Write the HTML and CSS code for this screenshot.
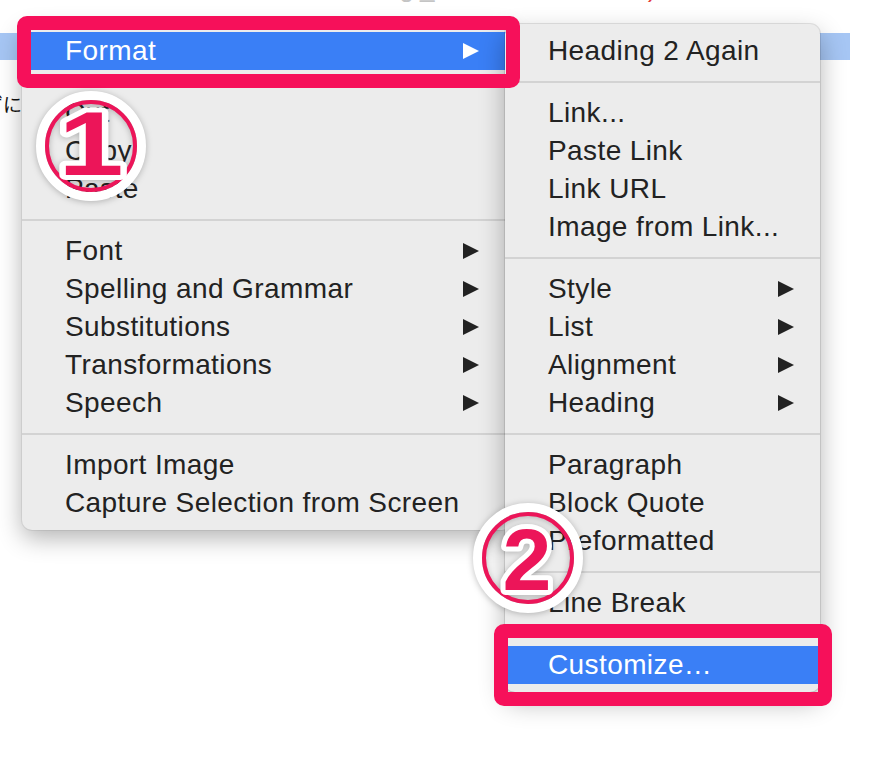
FILE: index.html
```html
<!DOCTYPE html>
<html lang="ja">
<head>
  <meta charset="UTF-8" />
  <meta name="viewport" content="width=device-width, initial-scale=1.0"/>
  <title>Format &gt; Customize</title>
  <link rel="stylesheet" href="styles.css">
</head>
<body>

  <div class="doc">
    <div class="cut"><p>見出しを Heading_2 にする方法 <span class="red">)</span></p></div>
    <div class="sel"></div>
    <p class="line">ずに</p>
  </div>

  <div class="menu menu-main">
    <div class="item active">Format<span class="arrow"></span></div>
    <div class="sep"></div>
    <div class="item">Cut</div>
    <div class="item">Copy</div>
    <div class="item">Paste</div>
    <div class="sep"></div>
    <div class="item">Font<span class="arrow"></span></div>
    <div class="item">Spelling and Grammar<span class="arrow"></span></div>
    <div class="item">Substitutions<span class="arrow"></span></div>
    <div class="item">Transformations<span class="arrow"></span></div>
    <div class="item">Speech<span class="arrow"></span></div>
    <div class="sep"></div>
    <div class="item">Import Image</div>
    <div class="item">Capture Selection from Screen</div>
  </div>

  <div class="menu menu-sub">
    <div class="item">Heading 2 Again</div>
    <div class="sep"></div>
    <div class="item">Link...</div>
    <div class="item">Paste Link</div>
    <div class="item">Link URL</div>
    <div class="item">Image from Link...</div>
    <div class="sep"></div>
    <div class="item">Style<span class="arrow"></span></div>
    <div class="item">List<span class="arrow"></span></div>
    <div class="item">Alignment<span class="arrow"></span></div>
    <div class="item">Heading<span class="arrow"></span></div>
    <div class="sep"></div>
    <div class="item">Paragraph</div>
    <div class="item">Block Quote</div>
    <div class="item">Preformatted</div>
    <div class="sep"></div>
    <div class="item">Line Break</div>
    <div class="sep"></div>
    <div class="item active">Customize…</div>
  </div>

  <div class="mark mark-format"></div>
  <div class="mark mark-customize"></div>

  <svg class="step step-1" viewBox="0 0 120 120" width="120" height="120">
    <circle cx="60" cy="60" r="50.5" fill="none" stroke="#fff" stroke-width="9"/>
    <circle cx="60" cy="60" r="44" fill="none" stroke="#ec1559" stroke-width="4"/>
    <text x="60" y="89" class="num num-wide" transform="translate(60 0) scale(1.3 1) translate(-60 0)">1</text>
  </svg>

  <svg class="step step-2" viewBox="0 0 120 120" width="120" height="120">
    <circle cx="60" cy="60" r="50.5" fill="none" stroke="#fff" stroke-width="9"/>
    <circle cx="60" cy="60" r="44" fill="none" stroke="#ec1559" stroke-width="4"/>
    <text x="59" y="92" class="num">2</text>
  </svg>

</body>
</html>
```

FILE: styles.css
```css
body {
  margin: 0;
  background: #fff;
  font-family: "Liberation Sans", Arial, sans-serif;
  overflow: hidden;
}

/* document behind the menus */
.doc {
  position: relative;
}

.cut {
  height: 8px;
  overflow: hidden;
}

.cut p {
  margin: -27px 0 0 140px;
  font-size: 26px;
  line-height: 30px;
  color: #c4c4c4;
  letter-spacing: 6px;
  font-family: "Liberation Sans", "Noto Sans CJK JP", sans-serif;
}

.cut .red {
  color: #e53b3b;
}

.sel {
  margin-top: 25px;
  width: 850px;
  height: 27px;
  background: #a6c6f4;
}

.line {
  margin: 32px 0 0 -16px;
  font-size: 19px;
  line-height: 24px;
  color: #111;
  font-family: "Noto Sans CJK JP", sans-serif;
}

/* menus */
.menu {
  position: absolute;
  top: 24px;
  padding: 8px 0;
  background: #ececec;
  border-radius: 10px;
  box-sizing: border-box;
  color: #222;
  font-size: 28px;
  letter-spacing: 0.4px;
}

.menu-main {
  left: 22px;
  width: 490px;
  height: 506px;
  box-shadow: 0 8px 24px rgba(0,0,0,0.3), 0 0 0 1px rgba(0,0,0,0.06);
}

.menu-sub {
  left: 505px;
  width: 315px;
  height: 668px;
  box-shadow: 0 10px 26px rgba(0,0,0,0.3), 0 0 0 1px rgba(0,0,0,0.1);
}

.item {
  display: flex;
  align-items: center;
  justify-content: space-between;
  height: 38px;
  padding: 0 26px 0 43px;
  white-space: nowrap;
}

.menu-main .item {
  padding-right: 33px;
}

.item.active {
  background: #3a7ff6;
  color: #fff;
}

.arrow {
  width: 0;
  height: 0;
  border-top: 8px solid transparent;
  border-bottom: 8px solid transparent;
  border-left: 16px solid #222;
}

.active .arrow {
  border-left-color: #fff;
}

.sep {
  height: 24px;
  display: flex;
  align-items: center;
}

.sep::before {
  content: "";
  flex: 1;
  height: 2px;
  background: #d3d3d3;
}

/* annotations */
.mark {
  position: absolute;
  border: 14px solid #f6105a;
  border-radius: 10px;
}

.mark-format {
  left: 17px;
  top: 16px;
  width: 475px;
  height: 44px;
}

.mark-customize {
  left: 494px;
  top: 624px;
  width: 310px;
  height: 54px;
}

.step {
  position: absolute;
  filter: drop-shadow(0 1px 3px rgba(0,0,0,0.25));
}

.step-1 {
  left: 31px;
  top: 86px;
}

.step-2 {
  left: 468px;
  top: 498px;
}

.num {
  font-family: "Liberation Sans", Arial, sans-serif;
  font-weight: bold;
  font-size: 88px;
  text-anchor: middle;
  fill: #ec1559;
  stroke: #fff;
  stroke-width: 10px;
  stroke-linejoin: round;
  paint-order: stroke;
}

.num-wide {
  font-size: 90px;
}
```
